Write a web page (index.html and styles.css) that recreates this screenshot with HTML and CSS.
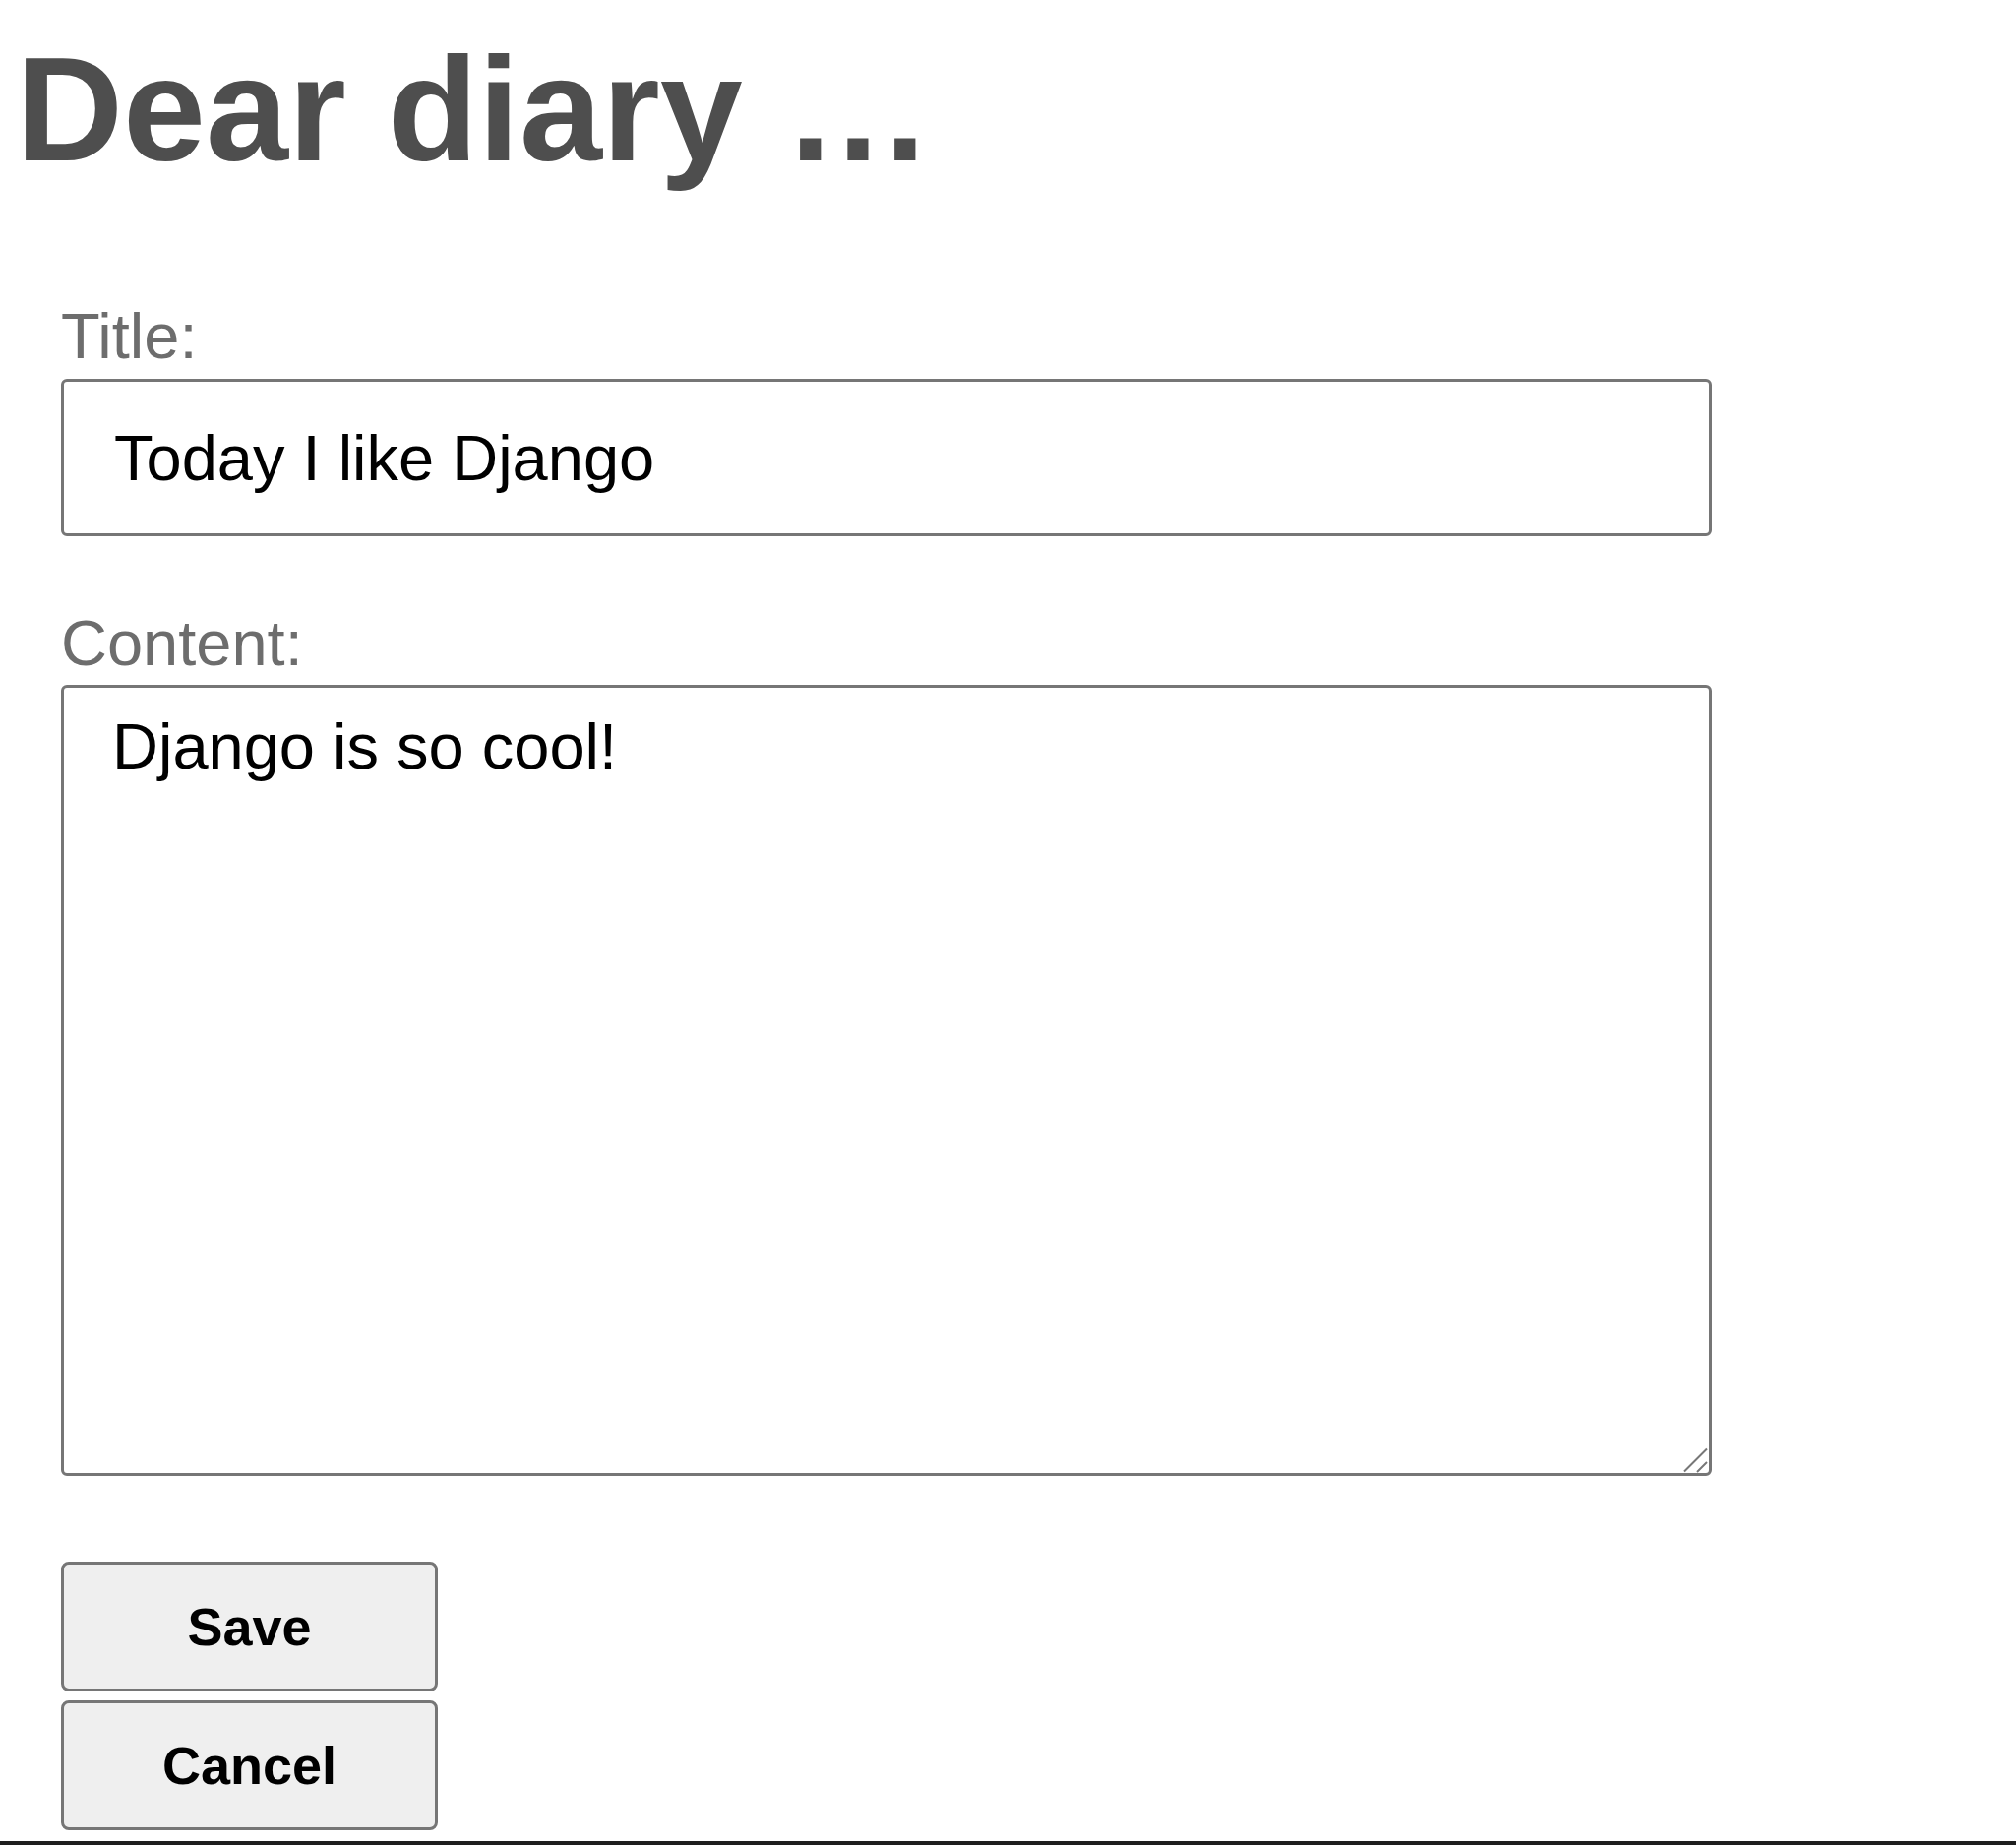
FILE: index.html
```html
<!DOCTYPE html>
<html lang="en">
<head>
<meta charset="utf-8">
<title>Dear diary</title>
<link rel="stylesheet" href="styles.css">
</head>
<body>
<h1 class="title">Dear diary …</h1>
<form class="entry-form">
  <div class="field field-title">
    <label class="field-label" for="id_title">Title:</label>
    <input class="text-input" id="id_title" type="text" value="Today I like Django">
  </div>
  <div class="field field-content">
    <label class="field-label" for="id_content">Content:</label>
    <div class="textarea-wrap">
      <textarea class="text-area" id="id_content">Django is so cool!</textarea>
      <svg class="resize-grip" width="30" height="30" viewBox="0 0 30 30" aria-hidden="true">
        <line x1="2" y1="25.5" x2="25" y2="2.5" stroke="#777" stroke-width="2"/>
        <line x1="15" y1="26" x2="25" y2="16" stroke="#777" stroke-width="2"/>
      </svg>
    </div>
  </div>
  <div class="actions">
    <button class="btn" type="submit">Save</button>
    <button class="btn" type="button">Cancel</button>
  </div>
</form>
<div class="bottom-bar"></div>
</body>
</html>
```

FILE: styles.css
```css
html, body {
  margin: 0;
  padding: 0;
  background: #ffffff;
}

body {
  font-family: "Liberation Sans", Arial, sans-serif;
  color: #000;
  overflow: hidden;
}

.title {
  margin: 0;
  padding: 35px 0 0 16px;
  font-size: 151px;
  line-height: 151px;
  font-weight: bold;
  color: #4e4e4e;
}

.entry-form {
  padding-left: 62px;
  width: 1678px;
}

.field {
  display: flex;
  flex-direction: column;
}

.field-title {
  margin-top: 123px;
}

.field-content {
  margin-top: 76px;
}

.field-label {
  font-size: 65px;
  line-height: 65px;
  color: #6d6d6d;
}

.field-title .field-label {
  margin-bottom: 11px;
}

.field-content .field-label {
  margin-bottom: 10px;
}

.text-input {
  box-sizing: border-box;
  width: 1678px;
  height: 160px;
  margin: 0;
  padding: 0 0 0 51px;
  border: 3px solid #767676;
  border-radius: 6px;
  font-family: "Liberation Sans", Arial, sans-serif;
  font-size: 65px;
  color: #000;
  background: #fff;
  outline: none;
}

.textarea-wrap {
  position: relative;
  width: 1678px;
  height: 804px;
}

.text-area {
  display: block;
  box-sizing: border-box;
  width: 1678px;
  height: 804px;
  margin: 0;
  padding: 22px 20px 0 49px;
  border: 3px solid #767676;
  border-radius: 6px;
  font-family: "Liberation Sans", Arial, sans-serif;
  font-size: 65px;
  line-height: 75px;
  color: #000;
  background: #fff;
  resize: none;
  outline: none;
  overflow: hidden;
}

.resize-grip {
  position: absolute;
  right: 0;
  bottom: 0;
}

.actions {
  display: flex;
  flex-direction: column;
  gap: 9px;
  margin-top: 87px;
}

.btn {
  box-sizing: border-box;
  width: 383px;
  height: 132px;
  margin: 0;
  padding: 0;
  border: 3px solid #767676;
  border-radius: 8px;
  background: #efefef;
  font-family: "Liberation Sans", Arial, sans-serif;
  font-size: 54px;
  font-weight: bold;
  color: #000;
  text-align: center;
}

.bottom-bar {
  margin-top: 11px;
  height: 4px;
  background: #1e1e1e;
}
```
